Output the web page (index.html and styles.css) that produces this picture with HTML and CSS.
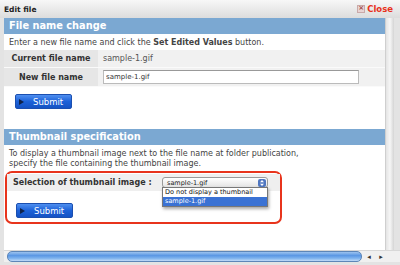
FILE: index.html
```html
<!DOCTYPE html>
<html lang="en">
<head>
    <meta charset="UTF-8">
    <title>Edit file</title>
    <link rel="stylesheet" href="styles.css">
</head>
<body>
    <div class="window">
        <div class="titlebar">
            <span class="title">Edit file</span>
            <a class="close-btn" href="#"><span class="close-icon">×</span>Close</a>
        </div>

        <div class="frame">
            <div class="content">
                <h2 class="section-head">File name change</h2>
                <p class="note">Enter a new file name and click the <b>Set Edited Values</b> button.</p>
                <table class="form-table">
                    <tr>
                        <th>Current file name</th>
                        <td>sample-1.gif</td>
                    </tr>
                    <tr>
                        <th>New file name</th>
                        <td><input class="text-input" type="text" value="sample-1.gif"></td>
                    </tr>
                </table>
                <div class="actions">
                    <button class="submit-btn"><span class="arrow"></span>Submit</button>
                </div>

                <h2 class="section-head thumb-head">Thumbnail specification</h2>
                <p class="note">To display a thumbnail image next to the file name at folder publication,<br>specify the file containing the thumbnail image.</p>

                <div class="highlight">
                    <div class="select-row">
                        <span class="select-label">Selection of thumbnail image :</span>
                        <div class="select-wrap">
                            <div class="select-box">sample-1.gif
                                <svg class="select-arrows" width="8" height="8" viewBox="0 0 8 8">
                                    <rect width="8" height="8" rx="2" fill="#4f76c0"/>
                                    <path d="M2 3.2 L4 1 L6 3.2 Z M2 4.8 L4 7 L6 4.8 Z" fill="white"/>
                                </svg>
                            </div>
                            <ul class="select-list">
                                <li>Do not display a thumbnail</li>
                                <li class="selected">sample-1.gif</li>
                            </ul>
                        </div>
                    </div>
                    <div class="actions">
                        <button class="submit-btn"><span class="arrow"></span>Submit</button>
                    </div>
                </div>
            </div>
            <div class="vscroll"></div>
        </div>

        <div class="hscroll">
            <div class="hscroll-thumb"></div>
            <span class="hscroll-btn">◂</span>
            <span class="hscroll-btn">▸</span>
        </div>
    </div>
</body>
</html>
```

FILE: styles.css
```css
body {
    margin: 0;
    padding: 0;
    font-family: "DejaVu Sans", Verdana, sans-serif;
    font-size: 8px;
    color: #333;
    background-color: #e6e6e6;
}

.window {
    width: 400px;
    height: 265px;
    display: flex;
    flex-direction: column;
    background-color: #e3e3e3;
    box-sizing: border-box;
    padding: 0 6px 3px 4px;
}

.titlebar {
    height: 18px;
    margin: 0 -6px 0 -4px;
    padding: 0 7px 0 4px;
    display: flex;
    align-items: center;
    justify-content: space-between;
    background: linear-gradient(#f7f7f7, #dcdcdc);
    box-sizing: border-box;
}

.title {
    font-weight: bold;
    font-size: 7.5px;
    color: #222;
}

.close-btn {
    color: #e8321c;
    font-weight: bold;
    font-size: 8.5px;
    text-decoration: none;
    display: flex;
    align-items: center;
}

.close-icon {
    display: inline-block;
    width: 6px;
    height: 6px;
    line-height: 5px;
    font-size: 7px;
    text-align: center;
    color: #a05050;
    background-color: #e8d4d4;
    border: 1px solid #c9a9a9;
    margin-right: 2px;
}

.frame {
    flex: 1;
    display: flex;
    background-color: white;
    overflow: hidden;
}

.content {
    flex: 1;
    background-color: white;
}

.vscroll {
    width: 8px;
    background: linear-gradient(90deg, #e4e4e4, #f6f6f6 50%, #d4d4d4);
    border-left: 1px solid #cfcfcf;
}

.section-head {
    margin: 0;
    height: 16px;
    line-height: 16px;
    padding-left: 5px;
    background-color: #7ba8d2;
    color: white;
    font-size: 9.8px;
    font-weight: bold;
}

.thumb-head {
    margin-top: 20px;
}

.note {
    margin: 0;
    padding: 4px 5px 2px 5px;
    line-height: 10px;
    color: #444;
}

.form-table {
    width: 100%;
    border-collapse: collapse;
}

.form-table th {
    width: 94px;
    height: 17px;
    padding: 0;
    text-align: center;
    background-color: #e6e6e6;
    color: #333;
    font-size: 8px;
    border-bottom: 1px solid #fafafa;
}

.form-table td {
    padding: 0 0 0 5px;
    background-color: #f1f1f1;
    border-bottom: 1px solid #fafafa;
    color: #555;
}

.text-input {
    width: 256px;
    height: 14px;
    margin: 2px 0;
    padding: 0 2px;
    font-family: inherit;
    font-size: 7px;
    border: 1px solid #bbb;
    border-top-color: #999;
    color: #333;
    box-sizing: border-box;
}

.actions {
    padding: 7px 0 0 11px;
}

.submit-btn {
    width: 57px;
    height: 15px;
    padding: 0 0 0 3px;
    border: 1px solid #1b4fb0;
    border-radius: 2px;
    background: linear-gradient(#4f8ff0, #1d62d8 50%, #1553c4);
    color: white;
    font-family: inherit;
    font-size: 8.5px;
    display: flex;
    align-items: center;
    gap: 9px;
    cursor: pointer;
}

.arrow {
    width: 0;
    height: 0;
    border-left: 5px solid #10234a;
    border-top: 3.5px solid transparent;
    border-bottom: 3.5px solid transparent;
}

.highlight {
    margin: 0 103px 0 1px;
    height: 53px;
    border: 2px solid #e8341c;
    border-radius: 7px;
    box-sizing: border-box;
}

.highlight .actions {
    padding-top: 12px;
    padding-left: 9px;
}

.select-row {
    height: 17px;
    margin-top: 1px;
    display: flex;
    align-items: center;
    background-color: #efefef;
}

.select-label {
    flex-shrink: 0;
    width: 155px;
    padding-left: 6px;
    font-weight: bold;
    font-size: 8px;
    white-space: nowrap;
    color: #333;
    box-sizing: border-box;
}

.select-wrap {
    position: relative;
}

.select-box {
    width: 106px;
    height: 11px;
    line-height: 10px;
    padding-left: 4px;
    box-sizing: border-box;
    font-size: 6.5px;
    color: #222;
    border: 1px solid #9a9a9a;
    border-radius: 3px;
    background: linear-gradient(white, #e4e4e4);
    position: relative;
}

.select-arrows {
    position: absolute;
    right: 1px;
    top: 0.5px;
}

.select-list {
    position: absolute;
    top: 10px;
    left: 0;
    margin: 0;
    padding: 0;
    list-style: none;
    width: 106px;
    background-color: white;
    border: 1px solid #777;
    box-sizing: border-box;
    box-shadow: 1px 2px 3px rgba(0, 0, 0, 0.35);
    font-size: 6.5px;
    color: #111;
}

.select-list li {
    height: 9px;
    line-height: 9px;
    padding-left: 2px;
    white-space: nowrap;
    overflow: hidden;
}

.select-list li.selected {
    background-color: #3a72d4;
    color: white;
}

.hscroll {
    height: 11px;
    margin-right: -6px;
    display: flex;
    align-items: center;
    gap: 2px;
    background-color: #f0f0f0;
    border-top: 1px solid #d8d8d8;
    padding: 0 14px 0 3px;
}

.hscroll-thumb {
    flex: 1;
    height: 9px;
    border-radius: 5px;
    background: linear-gradient(#9dc3ef, #5a97e4 40%, #7fb3ee 70%, #c1dbf7);
    border: 1px solid #5d86b8;
}

.hscroll-btn {
    width: 10px;
    font-size: 7px;
    color: #333;
    text-align: center;
}
```
